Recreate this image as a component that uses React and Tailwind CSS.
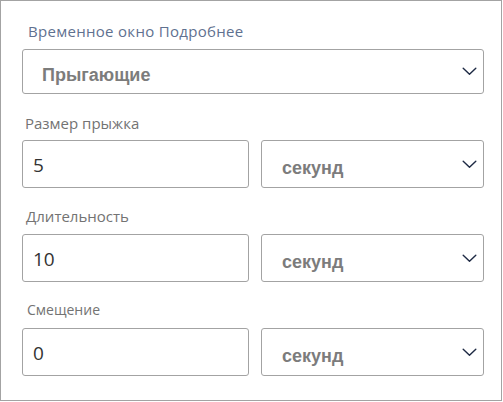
import React from "react";

const Chevron = () => (
  <svg width="15" height="9" viewBox="0 0 15 9" fill="none" className="shrink-0">
    <path d="M1.2 1.2 L7.5 7.3 L13.8 1.2" stroke="#1e2a44" strokeWidth="1.4" strokeLinecap="round" strokeLinejoin="round" />
  </svg>
);

const Select = ({ value, className = "", textPad = "pl-[19px]" }) => (
  <div
    className={`flex items-center justify-between border border-[#a3a3a3] rounded-[3px] bg-white pr-[6px] ${textPad} ${className}`}
  >
    <span className="mt-[8px] text-[18px] font-bold text-[#7c7c7c]" style={{ fontFamily: '"Liberation Sans", Arial, sans-serif' }}>
      {value}
    </span>
    <Chevron />
  </div>
);

const Input = ({ value }) => (
  <div className="flex items-center w-[227px] h-[48px] border border-[#a3a3a3] rounded-[3px] bg-white pl-[10px]">
    <span className="mt-[3px] text-[19px] text-[#333333]" style={{ fontFamily: '"Open Sans", "Noto Sans", sans-serif' }}>
      {value}
    </span>
  </div>
);

const Row = ({ value }) => (
  <div className="flex gap-[12px] mt-[8px]">
    <Input value={value} />
    <Select value="секунд" className="w-[223px] h-[48px]" textPad="pl-[20px]" />
  </div>
);

export default function App() {
  const font = { fontFamily: '"Open Sans", "Noto Sans", sans-serif' };
  return (
    <div className="w-[503px] h-[402px] bg-white">
      <div className="w-[502px] h-[401px] border border-[#a3a3a3] pl-[21px] pr-[17px] flex flex-col" style={font}>
        <div className="mt-[20px] h-[20px] leading-[20px] pl-[6px] text-[15px] tracking-[0.3px] text-[#5f7190]">
          Временное окно Подробнее
        </div>
        <Select value="Прыгающие" className="mt-[8px] w-[462px] h-[45px]" />
        <div className="mt-[19px] h-[20px] leading-[20px] pl-[3px] text-[15px] text-[#737373]">
          Размер прыжка
        </div>
        <div className="-mt-[1px]">
          <Row value="5" />
        </div>
        <div className="mt-[18px] h-[20px] leading-[20px] pl-[4px] text-[15px] text-[#737373]">
          Длительность
        </div>
        <Row value="10" />
        <div className="mt-[18px] h-[20px] leading-[20px] pl-[5px] text-[14px] text-[#737373]">
          Смещение
        </div>
        <Row value="0" />
      </div>
    </div>
  );
}
